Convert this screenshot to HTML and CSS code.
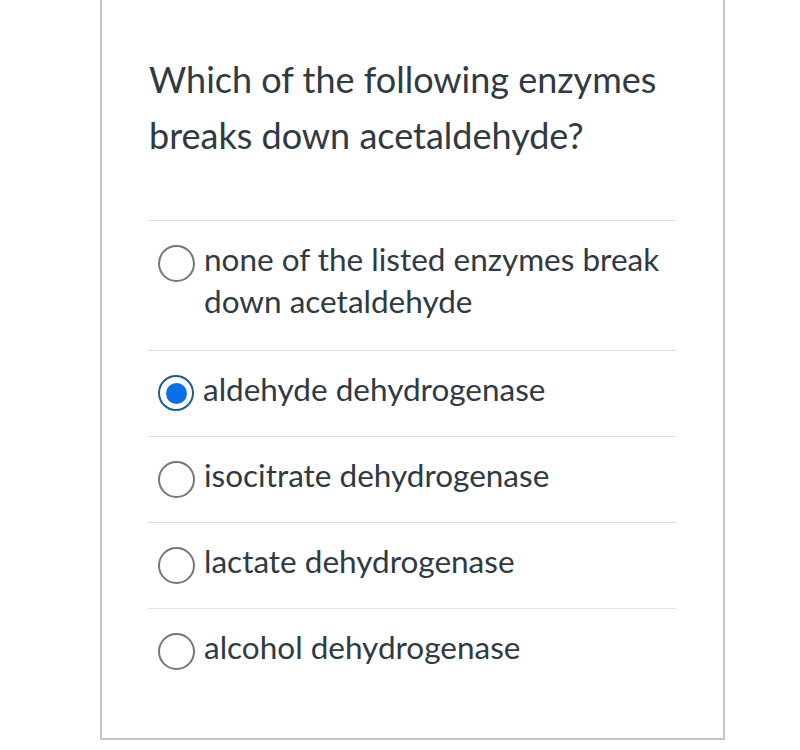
FILE: index.html
```html
<!DOCTYPE html>
<html>
<head>
<meta charset="utf-8">
<link rel="stylesheet" href="styles.css">
</head>
<body>
<div class="card">
  <div class="question">Which of the following enzymes breaks down acetaldehyde?</div>
  <div class="answers">
    <label class="answer">
      <span class="radio"></span>
      <span class="text">none of the listed enzymes break down acetaldehyde</span>
    </label>
    <label class="answer">
      <span class="radio checked"><span class="dot"></span></span>
      <span class="text">aldehyde dehydrogenase</span>
    </label>
    <label class="answer">
      <span class="radio"></span>
      <span class="text">isocitrate dehydrogenase</span>
    </label>
    <label class="answer">
      <span class="radio"></span>
      <span class="text">lactate dehydrogenase</span>
    </label>
    <label class="answer">
      <span class="radio"></span>
      <span class="text">alcohol dehydrogenase</span>
    </label>
  </div>
</div>
</body>
</html>
```
FILE: styles.css
```css
html, body {
  margin: 0;
  padding: 0;
  background: #ffffff;
}
body {
  font-family: Lato, "Liberation Sans", sans-serif;
  color: #2f3a42;
}
.card {
  margin-left: 100px;
  width: 621px;
  height: 738px;
  border: 2px solid #c6c6c6;
  border-top: none;
  box-sizing: content-box;
  padding: 0;
}
.question {
  padding: 51px 40px 0 47px;
  font-size: 36px;
  line-height: 56px;
  width: 540px;
}
.answers {
  margin: 57px 0 0 45px;
  width: 530px;
}
.answer {
  display: flex;
  align-items: flex-start;
  border-top: 1px solid #e2e2e2;
  padding: 17px 0 26px 0;
}
.answer:first-child {
  padding-bottom: 28px;
}
.radio {
  flex: none;
  width: 33px;
  height: 33px;
  margin: 7px 9px -10px 11px;
  border: 2px solid #777777;
  border-radius: 50%;
  box-sizing: content-box;
  display: flex;
  align-items: center;
  justify-content: center;
}
.radio.checked {
  border-color: #1d5f8a;
  border-width: 2.5px;
  width: 32px;
  height: 32px;
}
.dot {
  width: 21px;
  height: 21px;
  border-radius: 50%;
  background: #0a6fe8;
}
.text {
  font-size: 31.5px;
  line-height: 42px;
  width: 470px;
}
```
